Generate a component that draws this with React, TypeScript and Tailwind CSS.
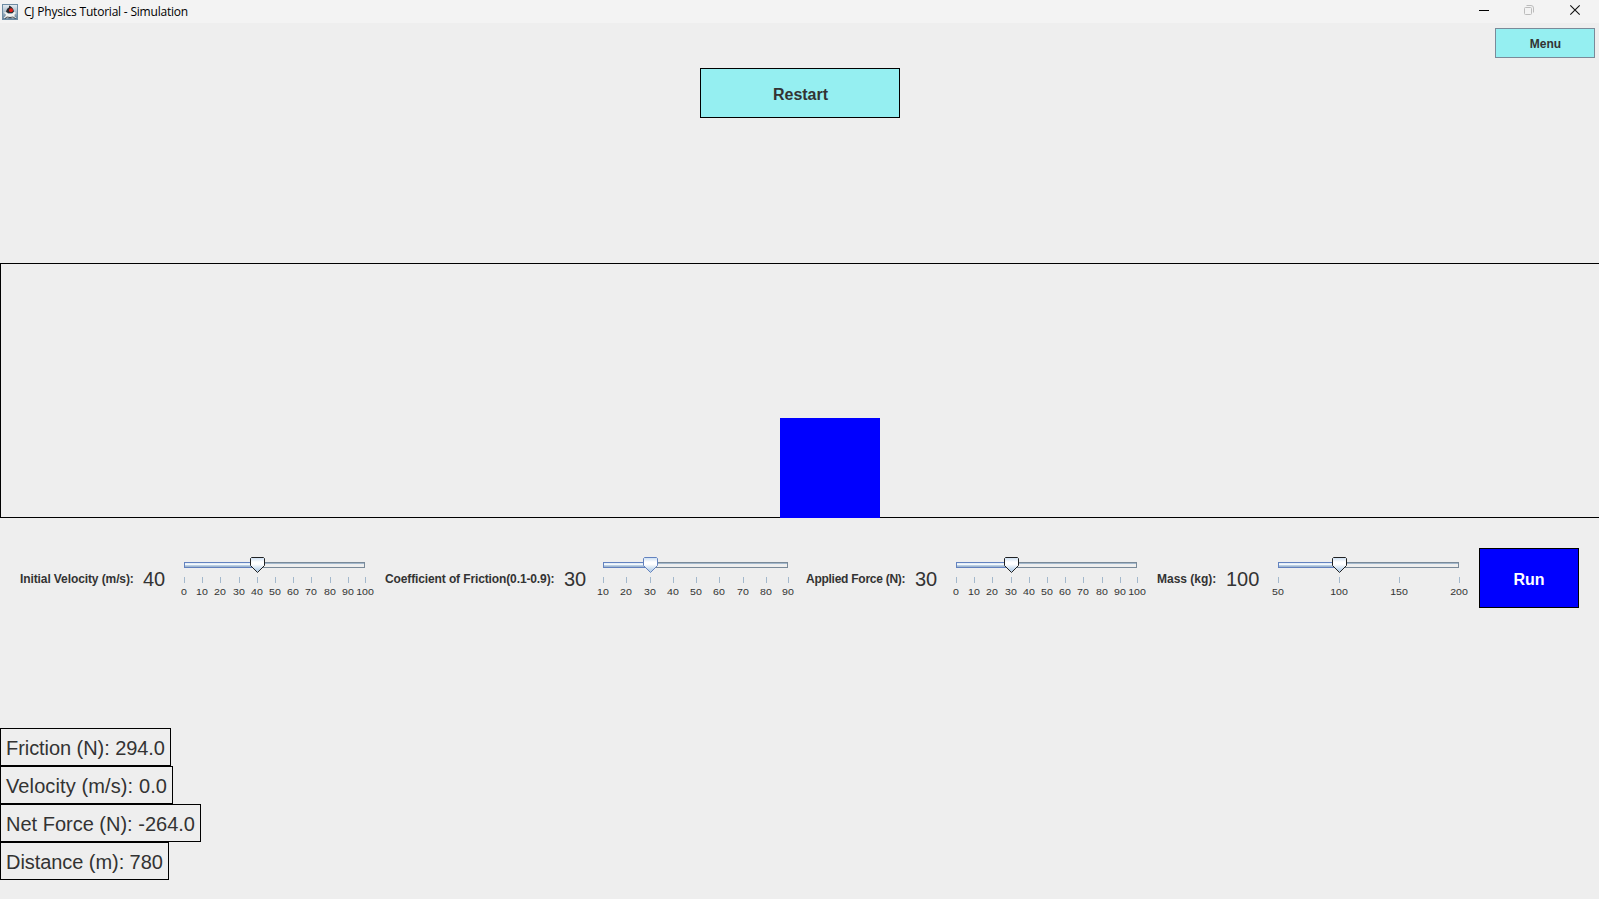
import React from 'react';

type Tick = { x: number; label: string };
type SliderProps = { left: number; width: number; thumb: number; ticks: Tick[]; active?: boolean };

const tens = (xs: number[], start: number): Tick[] => xs.map((x, i) => ({ x, label: String(start + i * 10) }));

function JavaIcon() {
  return (
    <svg width="16" height="16" viewBox="0 0 16 16" shapeRendering="crispEdges">
      <defs>
        <linearGradient id="duke" x1="0" y1="0" x2="0" y2="1">
          <stop offset="0" stopColor="#e3eaf0" />
          <stop offset="0.5" stopColor="#a9bccb" />
          <stop offset="1" stopColor="#5d7b95" />
        </linearGradient>
      </defs>
      <rect width="16" height="16" fill="#6d8ba3" />
      <rect x="1" y="1" width="14" height="14" fill="url(#duke)" />
      <g shapeRendering="auto">
        <path d="M1.5 8.5 L5 8 L6 10 L10 10 L12 7.5 L14 9 L12.5 10.5 L12.5 12.5 L14.5 14 L10 14.2 L8 13 L6 14.2 L1.5 14 L3.5 12 L4 10.5 Z" fill="#f2f2f0" />
        <path d="M7 1.5 C9 2 11.5 4 12 7.5 L10.5 9 L6 9 L4 8 C4.5 5.5 5.5 4 7 3.5 Z" fill="#2b2b2f" />
        <circle cx="9" cy="6.3" r="2" fill="#e5231b" />
        <path d="M3 14.5 L5 13 L8 13.5 L11 13 L13.5 14.5" fill="none" stroke="#23282d" strokeWidth="0.8" />
      </g>
    </svg>
  );
}

function Slider({ left, width, thumb, ticks, active }: SliderProps) {
  const edge = active ? '#6382bf' : '#222222';
  return (
    <svg width="200" height="44" viewBox="0 0 200 44" className="shrink-0 overflow-visible">
      <defs>
        <linearGradient id="thumbFill" x1="0" y1="0" x2="0" y2="1">
          <stop offset="0" stopColor="#c8ddf2" />
          <stop offset="0.3" stopColor="#ffffff" />
          <stop offset="0.45" stopColor="#ffffff" />
          <stop offset="0.8" stopColor="#c0d6ec" />
          <stop offset="1" stopColor="#b8cfe5" />
        </linearGradient>
      </defs>
      <g shapeRendering="crispEdges">
        <rect x={left} y="6" width={width} height="6" fill="#7a8a99" />
        <rect x={left} y="7" width={width - 1} height="1" fill="#a3b8cc" />
        <rect x={left} y="8" width={width - 1} height="3" fill="#eeeeee" />
        <rect x={left} y="6" width={thumb - left} height="6" fill="#6382bf" />
        <rect x={left + 1} y="7" width={thumb - left} height="1" fill="#e4eef8" />
        <rect x={left + 1} y="8" width={thumb - left} height="1" fill="#f4f8fc" />
        <rect x={left + 1} y="9" width={thumb - left} height="1" fill="#b8cfe5" />
        <rect x={left + 1} y="10" width={thumb - left} height="1" fill="#a3b8d0" />
        {ticks.map((t) => (
          <rect key={t.label} x={t.x} y="21" width="1" height="6" fill="#a3b8cc" />
        ))}
      </g>
      <path
        transform={`translate(${thumb - 7} 1)`}
        d="M1.5 0.5 H13.5 L14.5 1.5 V8.5 L7.5 15.5 L0.5 8.5 V1.5 Z"
        fill="url(#thumbFill)"
        stroke={edge}
      />
      {ticks.map((t) => (
        <text key={t.label} transform={`translate(${t.x} 39) scale(1.06 0.96)`} textAnchor="middle" fontSize="10" fill="#333333">
          {t.label}
        </text>
      ))}
    </svg>
  );
}

function Control({ label, labelClass, value, valueClass, slider }: {
  label: string; labelClass: string; value: string; valueClass: string; slider: SliderProps;
}) {
  return (
    <div className="flex shrink-0 items-center gap-[10px]">
      <span className={`shrink-0 whitespace-nowrap pt-[2px] text-[12px] leading-4 font-bold ${labelClass}`}>{label}</span>
      <span className={`shrink-0 whitespace-nowrap pt-[2px] text-[20px] leading-6 ${valueClass}`}>{value}</span>
      <Slider {...slider} />
    </div>
  );
}

const readings = [
  { text: 'Friction (N): 294.0', size: 'w-[171px] tracking-[-0.06px]' },
  { text: 'Velocity (m/s): 0.0', size: 'w-[173px] tracking-[0.11px]' },
  { text: 'Net Force (N): -264.0', size: 'w-[201px]' },
  { text: 'Distance (m): 780', size: 'w-[169px] tracking-[-0.06px]' },
];

export default function App() {
  return (
    <div className="flex h-[899px] w-[1599px] flex-col overflow-hidden bg-[#eeeeee] font-['Liberation_Sans',Arial,sans-serif] text-[#333333]">
      <header className="flex h-[23px] shrink-0 items-center justify-between bg-[#f3f3f3] pl-[2px]">
        <div className="flex items-center gap-[6px]">
          <JavaIcon />
          <span className="font-['Open_Sans','Noto_Sans',sans-serif] text-[12px] leading-4 tracking-[-0.21px] text-black">CJ Physics Tutorial - Simulation</span>
        </div>
        <svg width="149" height="23" viewBox="0 0 149 23" fill="none">
          <path d="M29 10.5 H39" stroke="#000000" />
          <rect x="74.5" y="7.5" width="7" height="7" rx="1" stroke="#bcbcbc" />
          <path d="M76.5 5.5 H81 Q83.5 5.5 83.5 8 V12.5" stroke="#bcbcbc" />
          <path d="M120.3 5.3 L129.7 14.7 M129.7 5.3 L120.3 14.7" stroke="#111111" strokeWidth="1.1" />
        </svg>
      </header>

      <div className="flex h-[45px] shrink-0 justify-end pt-[5px] pr-1">
        <button className="h-[30px] w-[100px] border border-[#7a8a99] bg-[#95eff1] pt-[2px] pl-[1px] text-[12px] font-bold">Menu</button>
      </div>
      <div className="flex h-[195px] shrink-0 justify-center pl-[1px]">
        <button className="h-[50px] w-[200px] border border-black bg-[#95eff1] pt-[4px] pl-[1px] text-[16px] font-bold">Restart</button>
      </div>

      <section className="flex h-[255px] shrink-0 items-end border-y border-l border-black pl-[779px]">
        <div className="-mb-px h-[100px] w-[100px] bg-[#0000ff]" />
      </section>

      <section className="flex h-[120px] shrink-0 items-center gap-[10px] px-5">
        <Control label="Initial Velocity (m/s):" labelClass="w-[113px] tracking-[-0.1px]" value="40" valueClass="w-[22px]"
          slider={{ left: 9, width: 181, thumb: 82, ticks: tens([9, 27, 45, 64, 82, 100, 118, 136, 155, 173, 190], 0) }} />
        <Control label="Coefficient of Friction(0.1-0.9):" labelClass="w-[169px] tracking-[-0.12px]" value="30" valueClass="w-[22px]"
          slider={{ left: 7, width: 185, thumb: 54, active: true, ticks: tens([7, 30, 54, 77, 100, 123, 147, 170, 192], 10) }} />
        <Control label="Applied Force (N):" labelClass="w-[99px] tracking-[-0.26px]" value="30" valueClass="w-[22px]"
          slider={{ left: 9, width: 181, thumb: 64, ticks: tens([9, 27, 45, 64, 82, 100, 118, 136, 155, 173, 190], 0) }} />
        <Control label="Mass (kg):" labelClass="w-[59px]" value="100" valueClass="w-[33px]"
          slider={{ left: 9, width: 181, thumb: 70, ticks: [{ x: 9, label: '50' }, { x: 70, label: '100' }, { x: 130, label: '150' }, { x: 190, label: '200' }] }} />
        <button className="h-[60px] w-[100px] shrink-0 border border-black bg-[#0000ff] pt-[4px] text-[16px] font-bold text-white">Run</button>
      </section>

      <section className="flex flex-col items-start pt-[90px]">
        {readings.map((r) => (
          <div key={r.text} className={`flex h-[38px] items-center whitespace-nowrap border border-black pt-[2px] pl-[5px] text-[20px] leading-6 ${r.size}`}>
            {r.text}
          </div>
        ))}
      </section>
    </div>
  );
}
